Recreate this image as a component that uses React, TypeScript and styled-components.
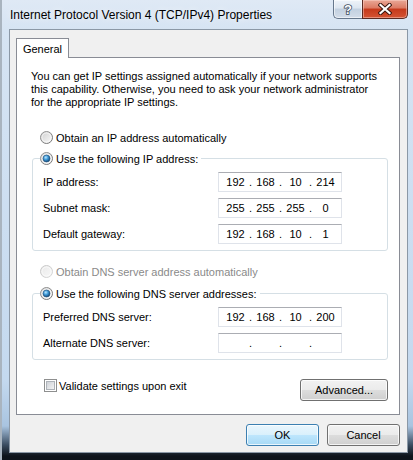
import React, { useId } from 'react';
import styled, { createGlobalStyle } from 'styled-components';

const GlobalStyle = createGlobalStyle`
  html, body {
    margin: 0;
    padding: 0;
    overflow: hidden;
    background: #c9dcf0;
  }
  * {
    box-sizing: border-box;
  }
`;

const font = `"Segoe UI", "Liberation Sans", Arial, sans-serif`;

const Frame = styled.div`
  display: flex;
  flex-direction: column;
  width: 413px;
  height: 460px;
  padding: 0 5px 7px 7px;
  font-family: ${font};
  font-size: 11px;
  color: #000;
  background: linear-gradient(
    to bottom,
    #dfe9f5 0px,
    #d6e4f3 30px,
    #c4d9ef 380px,
    #a9c4e0 426px,
    #3a4c60 445px,
    #0e141b 456px
  );
  border-left: 2px solid #a9b4bf;
`;

const TitleBar = styled.div`
  display: flex;
  justify-content: space-between;
  align-items: flex-start;
  height: 29px;
  margin-left: -7px;
  margin-right: -5px;
  padding-left: 8px;
  padding-right: 5px;
`;

const Title = styled.div`
  padding-top: 7px;
  line-height: 16px;
  font-size: 12px;
  color: #000;
  white-space: nowrap;
  text-shadow: 0 0 6px rgba(255, 255, 255, 0.9);
`;

const CaptionButtons = styled.div`
  display: flex;
`;

const HelpButton = styled.div`
  display: flex;
  align-items: center;
  justify-content: center;
  width: 29px;
  height: 19px;
  border: 1px solid #66778c;
  border-top: none;
  border-right: none;
  border-bottom-left-radius: 5px;
  background: linear-gradient(to bottom, #eef3f9 0%, #dde6f0 45%, #c2d0e0 50%, #d3dde9 100%);
  box-shadow: inset 0 0 0 1px rgba(255, 255, 255, 0.55);
`;

const CloseButton = styled.div`
  display: flex;
  align-items: center;
  justify-content: center;
  width: 46px;
  height: 19px;
  border: 1px solid #5a2a22;
  border-top: none;
  border-bottom-right-radius: 5px;
  background: linear-gradient(to bottom, #e9a896 0%, #dc7a63 45%, #c5391b 50%, #d45434 100%);
  box-shadow: inset 0 0 0 1px rgba(255, 220, 210, 0.45);
`;

const Client = styled.div`
  flex: 1;
  display: flex;
  flex-direction: column;
  background: #f0f0f0;
  border: 1px solid #8b98a6;
  padding: 8px 7px 0 6px;
`;

const TabStrip = styled.div`
  display: flex;
  height: 20px;
  margin-bottom: -1px;
  position: relative;
  z-index: 1;
`;

const Tab = styled.div`
  display: flex;
  align-items: center;
  justify-content: center;
  width: 53px;
  height: 20px;
  border: 1px solid #898c95;
  border-bottom: none;
  background: #fff;
  padding-top: 1px;
`;

const Panel = styled.div`
  display: flex;
  flex-direction: column;
  height: 358px;
  background: #fff;
  border: 1px solid #898c95;
  padding: 12px 11px 0 14px;
`;

const Intro = styled.p`
  margin: 0;
  line-height: 13px;
  white-space: nowrap;
`;

const OptionRow = styled.label<{ $top: number; $disabled?: boolean }>`
  display: flex;
  align-items: center;
  gap: 3px;
  height: 17px;
  margin-top: ${p => p.$top}px;
  margin-left: 9px;
  color: ${p => (p.$disabled ? '#8a8a8a' : '#000')};
  white-space: nowrap;
`;

const Group = styled.fieldset<{ $top: number }>`
  margin: ${p => p.$top}px 0 0 1px;
  padding: 0 10px 6px 10px;
  border: 1px solid #d5dfe5;
  border-radius: 3px;
  min-width: 0;
`;

const Legend = styled.legend`
  display: flex;
  align-items: center;
  gap: 3px;
  height: 17px;
  margin-left: -3px;
  padding: 0 3px 0 0;
  white-space: nowrap;
`;

const FieldRows = styled.div`
  display: flex;
  flex-direction: column;
  gap: 6px;
  margin-top: 5px;
`;

const FieldRow = styled.div`
  display: flex;
  align-items: center;
  height: 20px;
`;

const FieldLabel = styled.span`
  width: 175px;
  white-space: nowrap;
`;

const IpBox = styled.div`
  display: flex;
  align-items: center;
  width: 124px;
  height: 20px;
  padding-left: 3px;
  border: 1px solid #dfe3ea;
  border-top-color: #abadb3;
  background: #fff;
`;

const Octet = styled.span`
  width: 27px;
  text-align: center;
`;

const Dot = styled.span`
  width: 3px;
  text-align: center;
`;

const BottomRow = styled.div`
  display: flex;
  justify-content: space-between;
  align-items: flex-start;
  margin-top: 17px;
`;

const CheckRow = styled.label`
  display: flex;
  align-items: center;
  gap: 2px;
  height: 17px;
  margin-left: 13px;
  white-space: nowrap;
`;

const Button = styled.button<{ $default?: boolean; $width: number }>`
  width: ${p => p.$width}px;
  height: 22px;
  margin: 0;
  padding: 0;
  font-family: ${font};
  font-size: 11px;
  color: #000;
  border: 1px solid ${p => (p.$default ? '#3c7fb1' : '#707070')};
  border-radius: 3px;
  background: ${p =>
    p.$default
      ? 'linear-gradient(to bottom, #eaf6fd 0%, #d9f0fc 50%, #bee6fd 50%, #a7d9f5 100%)'
      : 'linear-gradient(to bottom, #f2f2f2 0%, #ebebeb 50%, #dddddd 50%, #cfcfcf 100%)'};
  box-shadow: inset 0 0 0 1px rgba(255, 255, 255, 0.75);
`;

const AdvancedButton = styled(Button)`
  margin-top: 2px;
`;

const Footer = styled.div`
  display: flex;
  justify-content: flex-end;
  gap: 8px;
  margin-top: 9px;
`;

function Radio({ checked, disabled }: { checked?: boolean; disabled?: boolean }) {
  const id = useId().replace(/:/g, '');
  return (
    <svg width="13" height="13" viewBox="0 0 13 13">
      <defs>
        <linearGradient id={`ring${id}`} x1="0" y1="0" x2="1" y2="1">
          <stop offset="0" stopColor={disabled ? '#c5c5c5' : '#9a9a9a'} />
          <stop offset="1" stopColor={disabled ? '#d8d8d8' : '#6f6f6f'} />
        </linearGradient>
        <linearGradient id={`fill${id}`} x1="0" y1="0" x2="1" y2="1">
          <stop offset="0" stopColor={disabled ? '#e9e9e9' : '#cfcfcf'} />
          <stop offset="1" stopColor={disabled ? '#f8f8f8' : '#fbfbfb'} />
        </linearGradient>
        <radialGradient id={`dot${id}`} cx="0.4" cy="0.35" r="0.7">
          <stop offset="0" stopColor="#b8e6ff" />
          <stop offset="0.45" stopColor="#3f9ad8" />
          <stop offset="1" stopColor="#0d3e6b" />
        </radialGradient>
      </defs>
      <circle cx="6.5" cy="6.5" r="6" fill={`url(#fill${id})`} stroke={`url(#ring${id})`} strokeWidth="1" />
      <circle cx="6.5" cy="6.5" r="4.5" fill="none" stroke="#ffffff" strokeOpacity="0.6" strokeWidth="1" />
      {checked && <circle cx="6.5" cy="6.5" r="3.5" fill={`url(#dot${id})`} stroke="#1e4f7a" strokeWidth="0.6" />}
    </svg>
  );
}

function Checkbox() {
  return (
    <svg width="13" height="13" viewBox="0 0 13 13">
      <defs>
        <linearGradient id="checkFill" x1="0" y1="0" x2="1" y2="1">
          <stop offset="0" stopColor="#cbcfd5" />
          <stop offset="1" stopColor="#f6f6f6" />
        </linearGradient>
      </defs>
      <rect x="0.5" y="0.5" width="12" height="12" fill="#fff" stroke="#8e8f8f" />
      <rect x="2.5" y="2.5" width="8" height="8" fill="url(#checkFill)" stroke="#aeb3b9" />
    </svg>
  );
}

function IpField({ value }: { value?: string[] }) {
  const parts = value ?? ['', '', '', ''];
  return (
    <IpBox>
      {parts.map((p, i) => (
        <React.Fragment key={i}>
          {i > 0 && <Dot>.</Dot>}
          <Octet>{p}</Octet>
        </React.Fragment>
      ))}
    </IpBox>
  );
}

function Field({ label, value }: { label: string; value?: string[] }) {
  return (
    <FieldRow>
      <FieldLabel>{label}</FieldLabel>
      <IpField value={value} />
    </FieldRow>
  );
}

export default function App() {
  return (
    <>
      <GlobalStyle />
      <Frame>
        <TitleBar>
          <Title>Internet Protocol Version 4 (TCP/IPv4) Properties</Title>
          <CaptionButtons>
            <HelpButton>
              <svg width="12" height="14" viewBox="0 0 12 14">
                <text
                  x="6"
                  y="12"
                  textAnchor="middle"
                  fontFamily="Liberation Sans, Arial, sans-serif"
                  fontWeight="bold"
                  fontSize="13"
                  fill="#ffffff"
                  stroke="#3d4c5e"
                  strokeWidth="1.6"
                  paintOrder="stroke"
                >
                  ?
                </text>
              </svg>
            </HelpButton>
            <CloseButton>
              <svg width="14" height="12" viewBox="0 0 14 12">
                <path d="M2.5 2 L11.5 10 M11.5 2 L2.5 10" stroke="#3a1710" strokeWidth="4.2" strokeLinecap="square" />
                <path d="M2.5 2 L11.5 10 M11.5 2 L2.5 10" stroke="#ffffff" strokeWidth="2.2" strokeLinecap="square" />
              </svg>
            </CloseButton>
          </CaptionButtons>
        </TitleBar>
        <Client>
          <TabStrip>
            <Tab>General</Tab>
          </TabStrip>
          <Panel>
            <Intro>
              You can get IP settings assigned automatically if your network supports
              <br />
              this capability. Otherwise, you need to ask your network administrator
              <br />
              for the appropriate IP settings.
            </Intro>
            <OptionRow $top={20}>
              <Radio />
              Obtain an IP address automatically
            </OptionRow>
            <Group $top={4}>
              <Legend>
                <Radio checked />
                Use the following IP address:
              </Legend>
              <FieldRows>
                <Field label="IP address:" value={['192', '168', '10', '214']} />
                <Field label="Subnet mask:" value={['255', '255', '255', '0']} />
                <Field label="Default gateway:" value={['192', '168', '10', '1']} />
              </FieldRows>
            </Group>
            <OptionRow $top={12} $disabled>
              <Radio disabled />
              Obtain DNS server address automatically
            </OptionRow>
            <Group $top={5}>
              <Legend>
                <Radio checked />
                Use the following DNS server addresses:
              </Legend>
              <FieldRows>
                <Field label="Preferred DNS server:" value={['192', '168', '10', '200']} />
                <Field label="Alternate DNS server:" />
              </FieldRows>
            </Group>
            <BottomRow>
              <CheckRow>
                <Checkbox />
                Validate settings upon exit
              </CheckRow>
              <AdvancedButton $width={88}>Advanced...</AdvancedButton>
            </BottomRow>
          </Panel>
          <Footer>
            <Button $default $width={73}>OK</Button>
            <Button $width={73}>Cancel</Button>
          </Footer>
        </Client>
      </Frame>
    </>
  );
}
